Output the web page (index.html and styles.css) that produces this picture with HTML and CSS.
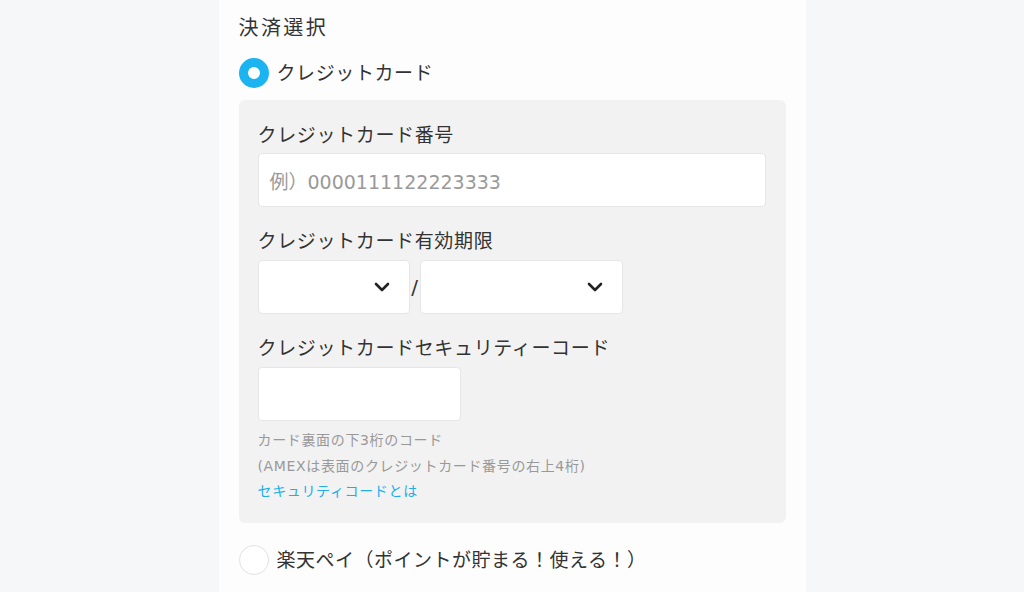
FILE: index.html
```html
<!DOCTYPE html>
<html lang="ja">
<head>
<meta charset="utf-8">
<link rel="stylesheet" href="styles.css">
</head>
<body>
<main class="column">
  <h2 class="title">決済選択</h2>
  <label class="radio-row">
    <span class="radio checked"></span>
    <span class="radio-label">クレジットカード</span>
  </label>
  <section class="panel">
    <div class="field-label">クレジットカード番号</div>
    <div class="input wide"><span class="placeholder">例）0000111122223333</span></div>

    <div class="field-label">クレジットカード有効期限</div>
    <div class="expiry">
      <div class="select month">
        <svg class="chev" width="16" height="10" viewBox="0 0 16 10"><path d="M2 2 L8 8 L14 2" fill="none" stroke="#222" stroke-width="2.6" stroke-linecap="round" stroke-linejoin="round"/></svg>
      </div>
      <span class="slash">/</span>
      <div class="select year">
        <svg class="chev" width="16" height="10" viewBox="0 0 16 10"><path d="M2 2 L8 8 L14 2" fill="none" stroke="#222" stroke-width="2.6" stroke-linecap="round" stroke-linejoin="round"/></svg>
      </div>
    </div>

    <div class="field-label">クレジットカードセキュリティーコード</div>
    <div class="input short"></div>
    <div class="notes">
      <p>カード裏面の下3桁のコード</p>
      <p>(AMEXは表面のクレジットカード番号の右上4桁)</p>
      <p><a class="link" href="#">セキュリティコードとは</a></p>
    </div>
  </section>
  <label class="radio-row second">
    <span class="radio"></span>
    <span class="radio-label">楽天ペイ（ポイントが貯まる！使える！）</span>
  </label>
</main>
</body>
</html>
```
FILE: styles.css
```css
html, body {
  margin: 0;
  padding: 0;
}
body {
  background: #f6f7f9;
  font-family: "DejaVu Sans", "Noto Sans CJK JP", sans-serif;
  color: #333;
  height: 592px;
  overflow: hidden;
}
.column {
  width: 587px;
  margin: 0 auto;
  background: #fdfdfd;
  height: 592px;
  box-sizing: border-box;
  padding: 13px 20px 0 20px;
}
.title {
  margin: 0;
  font-size: 20px;
  font-weight: 400;
  line-height: 30px;
  letter-spacing: 2.4px;
  color: #333;
}
.radio-row {
  display: flex;
  align-items: center;
  gap: 8px;
  margin-top: 15px;
  height: 30px;
}
.radio {
  width: 30px;
  height: 30px;
  box-sizing: border-box;
  border-radius: 50%;
  background: #fff;
  border: 1px solid #e2e2e2;
  flex: none;
}
.radio.checked {
  background: #fff;
  border: 9px solid #1bb4f0;
}
.radio-label {
  font-size: 19px;
  line-height: 26px;
  letter-spacing: 0.6px;
  color: #333;
}
.radio-row.second .radio-label {
  letter-spacing: 0.5px;
}
.panel {
  margin-top: 12px;
  background: #f2f2f2;
  border-radius: 6px;
  padding: 22px 20px 18px 19px;
}
.field-label {
  font-size: 19px;
  line-height: 26px;
  letter-spacing: 0.65px;
  color: #333;
  margin-bottom: 5px;
}
.input, .select {
  background: #fff;
  border: 1px solid #e6e6e6;
  border-radius: 4px;
  height: 54px;
  box-sizing: border-box;
}
.input.wide {
  display: flex;
  align-items: center;
  padding-left: 11px;
  margin-bottom: 21px;
}
.placeholder {
  font-size: 19px;
  color: #999;
}
.expiry {
  display: flex;
  align-items: center;
  margin-bottom: 21px;
  margin-top: 6px;
}
.select {
  display: flex;
  align-items: center;
  justify-content: flex-end;
  padding-right: 19px;
}
.select.month { width: 152px; }
.select.year { width: 203px; }
.slash {
  font-size: 20px;
  width: 10px;
  text-align: center;
  color: #333;
}
.chev { display: block; }
.input.short {
  width: 203px;
  margin-top: 6px;
}
.notes {
  margin-top: 7px;
  font-size: 14px;
  line-height: 25.5px;
  letter-spacing: 0.65px;
  color: #999;
}
.notes p { margin: 0; }
.link {
  color: #21aee8;
  text-decoration: none;
}
.radio-row.second {
  margin-top: 22px;
}
```
